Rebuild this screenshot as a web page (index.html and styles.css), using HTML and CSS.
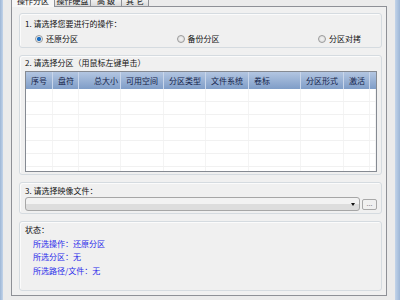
FILE: index.html
```html
<!DOCTYPE html>
<html lang="zh-CN">
  <head>
    <meta charset="UTF-8">
    <title>分区工具</title>
    <link rel="stylesheet" href="styles.css">
  </head>
  <body>
    <div class="screen">
      <div class="edge edge--left"></div>
      <div class="window">
        <div class="tabs">
          <div class="tab tab--active"><span>操作分区</span></div>
          <div class="tab tab--disk"><span>操作硬盘</span></div>
          <div class="tab tab--adv"><span>高 级</span></div>
          <div class="tab tab--other"><span>其 它</span></div>
        </div>
        <div class="panel">
          <div class="group group--op">
            <div class="group-label">1. 请选择您要进行的操作：</div>
            <div class="radios">
              <div class="radio"><i class="radio-dot radio-dot--on"></i>还原分区</div>
              <div class="radio"><i class="radio-dot"></i>备份分区</div>
              <div class="radio"><i class="radio-dot"></i>分区对拷</div>
            </div>
          </div>

          <div class="group group--parts">
            <div class="group-label">2. 请选择分区（用鼠标左键单击）</div>
            <div class="table">
              <div class="table-head">
                <div>序号</div>
                <div class="center">盘符</div>
                <div class="right">总大小</div>
                <div>可用空间</div>
                <div>分区类型</div>
                <div>文件系统</div>
                <div>卷标</div>
                <div>分区形式</div>
                <div>激活</div>
                <div></div>
              </div>
              <div class="table-row"><div></div><div></div><div></div><div></div><div></div><div></div><div></div><div></div><div></div><div></div></div>
              <div class="table-row"><div></div><div></div><div></div><div></div><div></div><div></div><div></div><div></div><div></div><div></div></div>
              <div class="table-row"><div></div><div></div><div></div><div></div><div></div><div></div><div></div><div></div><div></div><div></div></div>
              <div class="table-row"><div></div><div></div><div></div><div></div><div></div><div></div><div></div><div></div><div></div><div></div></div>
              <div class="table-row"><div></div><div></div><div></div><div></div><div></div><div></div><div></div><div></div><div></div><div></div></div>
              <div class="table-row"><div></div><div></div><div></div><div></div><div></div><div></div><div></div><div></div><div></div><div></div></div>
              <div class="table-row"><div></div><div></div><div></div><div></div><div></div><div></div><div></div><div></div><div></div><div></div></div>
            </div>
          </div>

          <div class="group group--file">
            <div class="group-label">3. 请选择映像文件：</div>
            <div class="file-row">
              <div class="combo"><i class="combo-arrow"></i></div>
              <div class="browse">...</div>
            </div>
          </div>

          <div class="group group--status">
            <div class="group-label">状态：</div>
            <div class="status-lines">
              <div>所选操作：还原分区</div>
              <div>所选分区：无</div>
              <div>所选路径/文件：无</div>
            </div>
          </div>
        </div>
      </div>
      <div class="edge edge--right"></div>
    </div>
  </body>
</html>
```

FILE: styles.css
```css
:root {
  font-family: "Noto Sans CJK SC", "Noto Sans", sans-serif;
  font-size: 8px;
  color: #111;
}

* {
  box-sizing: border-box;
}

body {
  margin: 0;
  width: 400px;
  height: 300px;
  overflow: hidden;
}

.screen {
  display: flex;
  height: 300px;
  background: #ebebeb;
}

.edge--left {
  width: 3px;
  background: linear-gradient(to right, #9db6d6, #c2d4ea);
}

.edge--right {
  width: 5px;
  background: linear-gradient(to right, #c2d4ea, #9db6d6);
}

.window {
  flex: 1;
  min-width: 0;
  display: flex;
  flex-direction: column;
  padding: 0 8px 4px 8px;
}

/* tab strip, cut off by the top of the shot */
.tabs {
  display: flex;
  align-items: flex-start;
  height: 6px;
}

.tab {
  height: 6px;
  overflow: hidden;
  border: 1px solid #8e9096;
  border-top: 0;
  border-bottom: 0;
  margin-right: -1px;
  background: linear-gradient(#f0f0f0, #d9d9d9);
}

.tab span {
  display: block;
  margin-top: -5px;
  line-height: 12px;
  text-align: center;
}

.tab--active {
  width: 44px;
  height: 7px;
  position: relative;
  z-index: 1;
  background: #f7f7f7;
}

.tab--disk {
  width: 37px;
}

.tab--adv {
  width: 32px;
}

.tab--other {
  width: 28px;
}

.panel {
  flex: 1;
  display: flex;
  flex-direction: column;
  gap: 7px;
  border: 1px solid #8e9096;
  background: #f0f0f0;
  padding: 6px 4px 4px 7px;
}

.group {
  border: 1px solid #d5dbe0;
  border-radius: 3px;
  box-shadow: inset 1px 1px 0 #fbfbfb;
  padding: 0 4px 2px 5px;
}

.group-label {
  line-height: 12px;
  white-space: nowrap;
}

.group--op {
  padding-top: 4px;
}

.radios {
  display: flex;
  justify-content: space-between;
  margin-top: 3px;
  padding: 0 16px 0 10px;
  line-height: 12px;
}

.radio {
  display: flex;
  align-items: center;
  gap: 3px;
}

.radio-dot {
  display: block;
  width: 8px;
  height: 8px;
  border-radius: 50%;
  border: 1px solid #9a9a9a;
  background: radial-gradient(circle, #f4f4f4, #d8d8d8);
}

.radio-dot--on {
  background: radial-gradient(circle, #1d6fc2 0 1.8px, #e6ecf2 2.4px);
}

.group--parts .group-label {
  margin-top: 1px;
}

.table {
  margin-top: 2px;
  height: 101px;
  overflow: hidden;
  border: 1px solid #858a92;
  background: #fff;
}

.table-head,
.table-row {
  display: grid;
  grid-template-columns: 27px 26px 42px 43px 42px 43px 52px 43px 26px 1fr;
}

.table-head {
  height: 17px;
  background: linear-gradient(#b3c6e1, #7f9dc8);
  color: #14234a;
}

.table-head div {
  border-right: 1px solid #c9d6ea;
  padding: 0 4px 0 5px;
  line-height: 17px;
  white-space: nowrap;
}

.table-head .center {
  text-align: center;
}

.table-head .right {
  text-align: right;
  padding-right: 2px;
}

.table-row {
  height: 13px;
  border-bottom: 1px solid #f1f1f1;
}

.table-row div {
  border-right: 1px solid #f4f4f4;
}

.group--file {
  padding-top: 2px;
}

.file-row {
  display: flex;
  align-items: center;
  gap: 2px;
  margin-top: 0;
}

.combo {
  flex: 1;
  height: 14px;
  position: relative;
  border: 1px solid #a6a6a6;
  border-radius: 3px;
  background: linear-gradient(#f2f2f2 50%, #dddddd 50%);
}

.combo-arrow {
  position: absolute;
  right: 4px;
  top: 5px;
  border-left: 2.5px solid transparent;
  border-right: 2.5px solid transparent;
  border-top: 3px solid #111;
}

.browse {
  width: 15px;
  height: 11px;
  border: 1px solid #a8a8a8;
  border-radius: 2px;
  background: #f0f0f0;
  color: #7a7a7a;
  font-size: 7px;
  line-height: 7px;
  text-align: center;
}

.group--status {
  flex: 1;
  padding-top: 2px;
}

.status-lines {
  padding-left: 8px;
  color: #2a2aea;
  line-height: 13.3px;
  margin-top: 1px;
}
```
